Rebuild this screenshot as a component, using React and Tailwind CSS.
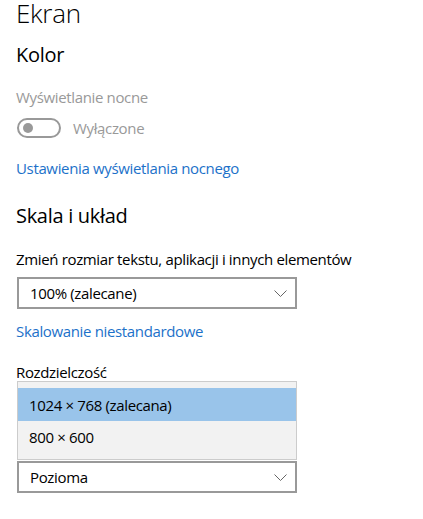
import React from "react";

function Chevron() {
  return (
    <svg width="13" height="7" viewBox="0 0 13 7" className="block">
      <path d="M0.5 0.5 L6.5 6.5 L12.5 0.5" fill="none" stroke="#666" strokeWidth="1" />
    </svg>
  );
}

function Select({ label }) {
  return (
    <div className="w-[280px] h-[32px] border-2 border-[#999999] bg-white flex items-center justify-between pl-[11px] pr-[8px]">
      <span className="text-[15px] leading-[20px] tracking-[-0.35px] text-black">{label}</span>
      <Chevron />
    </div>
  );
}

export default function App() {
  const body = "text-[15px] leading-[20px] tracking-[-0.35px]";
  return (
    <div
      className="relative w-[423px] h-[519px] bg-white overflow-hidden pl-[16px]"
      style={{ fontFamily: '"Open Sans", "Noto Sans", sans-serif' }}
    >
      <div className="text-[26px] leading-[26px] font-light tracking-[-0.3px] text-black">Ekran</div>
      <div className="mt-[17px] text-[20px] leading-[24px] tracking-[-0.3px] text-black">Kolor</div>
      <div className={`mt-[20px] ${body} text-[#999999]`}>Wyświetlanie nocne</div>
      <div className="mt-[11px] flex items-center h-[20px] gap-[12px]">
        <div className="ml-[1px] w-[44px] h-[20px] rounded-full border-2 border-[#999999] flex items-center pl-[4px]">
          <div className="w-[10px] h-[10px] rounded-full bg-[#999999]" />
        </div>
        <span className={`${body} text-[#999999]`}>Wyłączone</span>
      </div>
      <div className={`mt-[20px] ${body} text-[#1c71c9]`}>Ustawienia wyświetlania nocnego</div>
      <div className="mt-[26px] text-[20px] leading-[24px] tracking-[-0.3px] text-black">Skala i układ</div>
      <div className={`mt-[21px] ${body} text-black`}>Zmień rozmiar tekstu, aplikacji i innych elementów</div>
      <div className="mt-[8px] ml-[1px]">
        <Select label="100% (zalecane)" />
      </div>
      <div className={`mt-[12px] ${body} text-[#1c71c9]`}>Skalowanie niestandardowe</div>
      <div className={`mt-[21px] ${body} text-black`}>Rozdzielczość</div>
      <div className="mt-[8px] ml-[1px]">
        <Select label="1024 × 768 (zalecana)" />
      </div>
      <div className="h-[39px]" />
      <div className="ml-[1px]">
        <Select label="Pozioma" />
      </div>

      <div className="absolute left-[17px] top-[381px] w-[280px] h-[79px] border border-[#cccccc] bg-[#f2f2f2] pt-[6px]">
        <div className={`h-[33px] bg-[#99c4ea] flex items-center pl-[11px] ${body} text-black`}>
          1024 × 768 (zalecana)
        </div>
        <div className={`h-[32px] flex items-center pl-[11px] ${body} text-black`}>
          800 × 600
        </div>
      </div>
    </div>
  );
}
